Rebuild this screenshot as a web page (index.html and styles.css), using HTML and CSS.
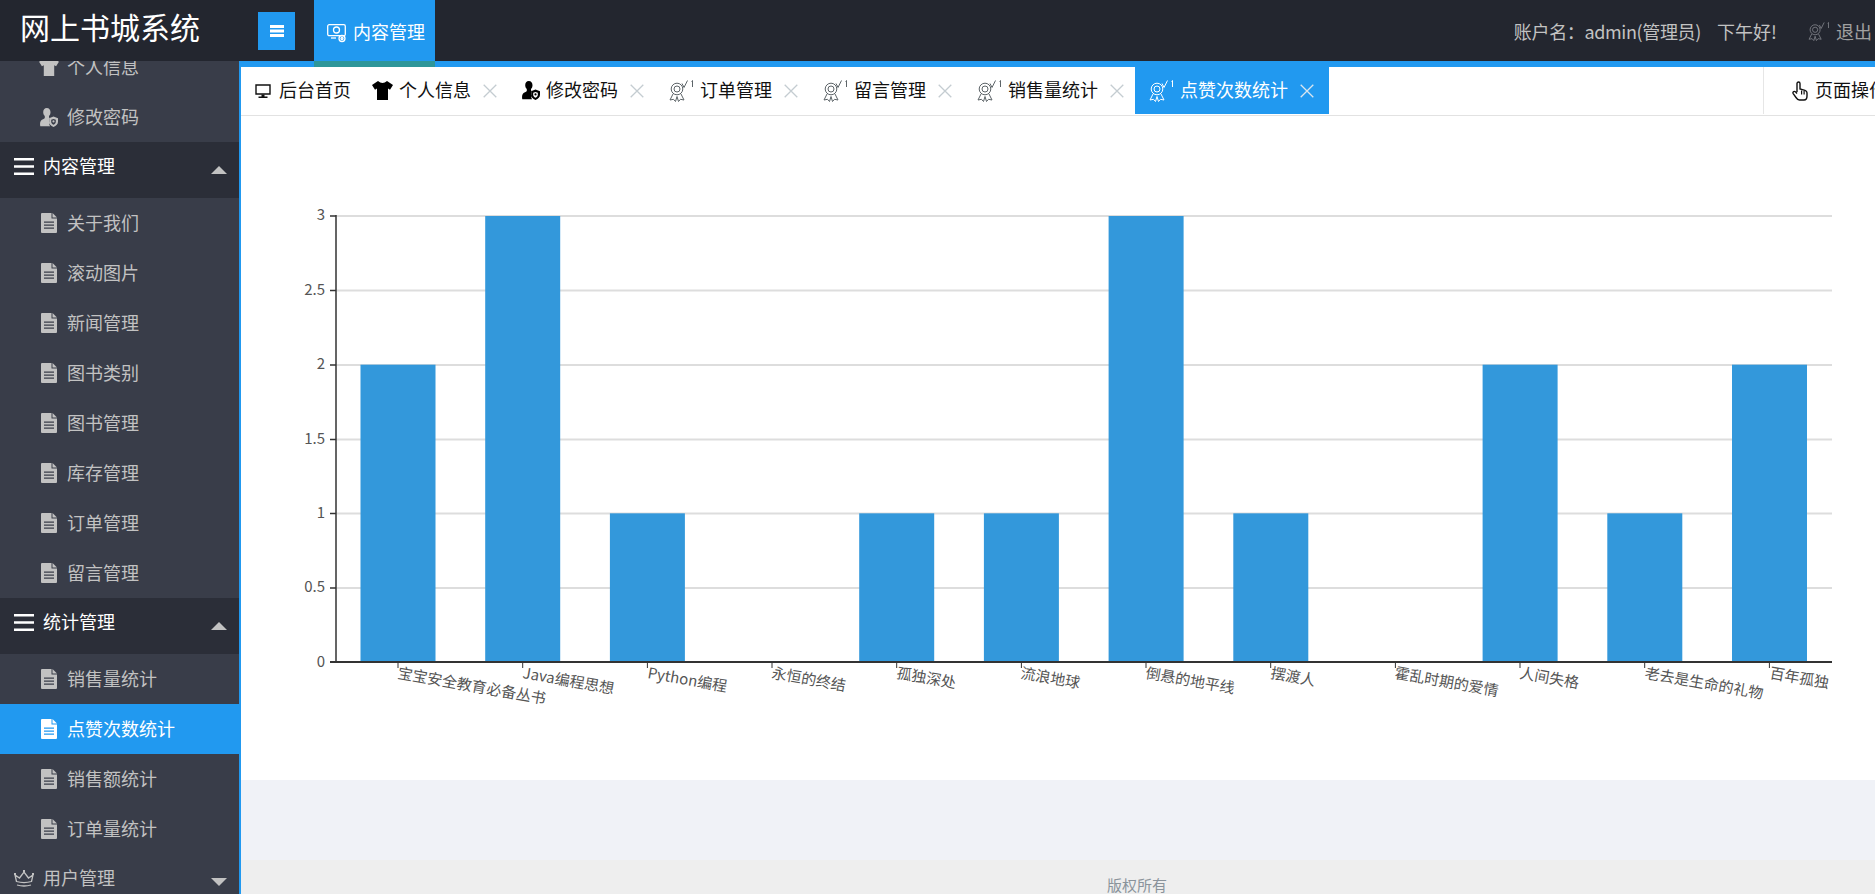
FILE: index.html
```html
<!DOCTYPE html>
<html lang="zh-CN">
<head>
<meta charset="utf-8">
<title>网上书城系统</title>
<link rel="stylesheet" href="styles.css">
</head>
<body>
<svg class="sprites" aria-hidden="true">
  <symbol id="i-monitor" viewBox="0 0 16 16">
    <path d="M1 2h14v9H1z" fill="none" stroke="currentColor" stroke-width="1.4"/>
    <path d="M6.5 11.5h3v2h-3zM3.5 13.6h9V15h-9z" fill="currentColor"/>
  </symbol>
  <symbol id="i-shirt" viewBox="0 0 21 19">
    <path fill="currentColor" d="M6 0q4.5 4 9 0l6 4-3 4.8-2-1.2V19H5V7.600L3 8.800 0 4z"/>
  </symbol>
  <symbol id="i-user" viewBox="0 0 18 19">
    <path fill="currentColor" fill-rule="evenodd" d="M6.800 0c2.300 0 3.700 1.900 3.700 4.300 0 1.500-.6 2.900-1.500 3.800v1.400l.6.300-.4.300v5.600c0 1 .3 1.800.9 2.500H.3c-.5-1.900-.2-4.600.8-5.700 1-1 2.900-1.400 3.700-2.400V8.100C3.900 7.200 3.200 5.800 3.200 4.300 3.200 1.900 4.500 0 6.800 0zM13.500 8.600l4.500 1.700v3.400c0 2.300-1.800 4.200-4.500 5.300-2.700-1.100-4.500-3-4.500-5.300v-3.400zM13.500 11l-2.300.8v2c0 1.200.9 2.300 2.300 3 1.400-.7 2.300-1.800 2.300-3v-2z"/>
    <circle cx="13.500" cy="13.400" r="1.100" fill="currentColor"/>
  </symbol>
  <symbol id="i-medal" viewBox="0 0 25 22">
    <g fill="none" stroke="currentColor" stroke-width="1">
      <circle cx="8" cy="9" r="5.800"/>
      <circle cx="8" cy="9" r="3"/>
      <path d="M4 14 1 20l3.500-.7 2 2.200L8 16.500l1.500 5 2-2.200 3.500.7L12 14"/>
      <path d="M13 3.500 15 7.500 18.500.5M22.500 1.500l1-1V7"/>
    </g>
  </symbol>
  <symbol id="i-doc" viewBox="0 0 16 20">
    <path fill="currentColor" fill-rule="evenodd" d="M1 0h9.500v5.500H16V19a1 1 0 0 1-1 1H1a1 1 0 0 1-1-1V1a1 1 0 0 1 1-1zM3 8.500v1.300h10V8.500zM3 11.500v1.300h10v-1.300zM3 14.500v1.300h10v-1.300z"/>
    <path fill="currentColor" d="M11.500 0 16 4.500h-4.500z"/>
  </symbol>
  <symbol id="i-burger" viewBox="0 0 20 17">
    <path fill="currentColor" d="M0 0h20v2.400H0zM0 7.300h20v2.400H0zM0 14.600h20V17H0z"/>
  </symbol>
  <symbol id="i-bars" viewBox="0 0 14 12">
    <path fill="currentColor" d="M0 0h14v3H0zM0 4.500h14v3H0zM0 9h14v3H0z"/>
  </symbol>
  <symbol id="i-close" viewBox="0 0 14 14">
    <path d="M.7.700l12.600 12.600M13.300.7.700 13.300" fill="none" stroke="currentColor" stroke-width="1.300"/>
  </symbol>
  <symbol id="i-hand" viewBox="0 0 16 20">
    <path fill="none" stroke="currentColor" stroke-width="1.400" d="M5 11V2.500a1.500 1.500 0 0 1 3 0V8l5 1.300c1.300.4 2 1.100 2 2.400V15c0 2-1 4-3 4H7.500C6 19 5 18 4 16.500L1.200 12.600c-.6-1-.1-2 .8-2.200.8-.2 1.500.1 3 2.100"/>
    <path fill="currentColor" d="M9 9.500h1.200v4H9zM11.500 10h1.200v3.500h-1.200z"/>
  </symbol>
  <symbol id="i-crown" viewBox="0 0 20 17">
    <g fill="none" stroke="currentColor" stroke-width="1.300">
      <path d="M2.500 11.500 1 5l4.500 3L10 2l4.500 6L19 5l-1.500 6.500c-4.500 1.300-10.500 1.300-15 0z"/>
      <path d="M3 15c4.500 1.300 9.500 1.300 14 0"/>
    </g>
    <path fill="currentColor" d="M9 0h2v2H9zM0 3h2v2H0zM18 3h2v2h-2z"/>
  </symbol>
  <symbol id="i-console" viewBox="0 0 20 19">
    <g fill="none" stroke="currentColor" stroke-width="1.300">
      <rect x=".7" y=".7" width="17.600" height="11" rx="1.500"/>
      <path d="M4 14h5"/>
      <circle cx="9.500" cy="6" r="3"/>
      <circle cx="15" cy="14.500" r="3"/>
      <circle cx="15" cy="14.500" r="1"/>
    </g>
  </symbol>
</svg>

<div class="app">
  <header class="topbar">
    <h1 class="logo">网上书城系统</h1>
    <button class="menu-btn" type="button"><svg class="i-menu"><use href="#i-bars"/></svg></button>
    <a class="nav-active"><svg class="i-console"><use href="#i-console"/></svg>内容管理</a>
    <div class="account">
      <span class="acct-name">账户名：admin(管理员)</span>
      <span class="acct-greet">下午好!</span>
      <a class="acct-exit"><svg class="i-medal"><use href="#i-medal"/></svg>退出</a>
    </div>
  </header>

  <div class="workspace">
    <aside class="sidebar">
      <ul class="menu">
        <li class="item"><span class="item-ico"><svg class="i-shirt-s"><use href="#i-shirt"/></svg></span>个人信息</li>
        <li class="item"><span class="item-ico"><svg class="i-user"><use href="#i-user"/></svg></span>修改密码</li>
        <li class="section open"><span class="sec-head"><svg class="i-burger"><use href="#i-burger"/></svg>内容管理</span><i class="arrow up"></i></li>
        <li class="item"><span class="item-ico"><svg class="i-doc"><use href="#i-doc"/></svg></span>关于我们</li>
        <li class="item"><span class="item-ico"><svg class="i-doc"><use href="#i-doc"/></svg></span>滚动图片</li>
        <li class="item"><span class="item-ico"><svg class="i-doc"><use href="#i-doc"/></svg></span>新闻管理</li>
        <li class="item"><span class="item-ico"><svg class="i-doc"><use href="#i-doc"/></svg></span>图书类别</li>
        <li class="item"><span class="item-ico"><svg class="i-doc"><use href="#i-doc"/></svg></span>图书管理</li>
        <li class="item"><span class="item-ico"><svg class="i-doc"><use href="#i-doc"/></svg></span>库存管理</li>
        <li class="item"><span class="item-ico"><svg class="i-doc"><use href="#i-doc"/></svg></span>订单管理</li>
        <li class="item"><span class="item-ico"><svg class="i-doc"><use href="#i-doc"/></svg></span>留言管理</li>
        <li class="section open"><span class="sec-head"><svg class="i-burger"><use href="#i-burger"/></svg>统计管理</span><i class="arrow up"></i></li>
        <li class="item"><span class="item-ico"><svg class="i-doc"><use href="#i-doc"/></svg></span>销售量统计</li>
        <li class="item active"><span class="item-ico"><svg class="i-doc"><use href="#i-doc"/></svg></span>点赞次数统计</li>
        <li class="item"><span class="item-ico"><svg class="i-doc"><use href="#i-doc"/></svg></span>销售额统计</li>
        <li class="item"><span class="item-ico"><svg class="i-doc"><use href="#i-doc"/></svg></span>订单量统计</li>
        <li class="section"><span class="sec-head"><svg class="i-burger"><use href="#i-crown"/></svg>用户管理</span><i class="arrow down"></i></li>
      </ul>
    </aside>

    <main class="main">
      <nav class="tabs">
        <a class="tab home"><svg class="i-monitor"><use href="#i-monitor"/></svg>后台首页</a>
        <a class="tab"><svg class="i-shirt"><use href="#i-shirt"/></svg>个人信息<svg class="i-close"><use href="#i-close"/></svg></a>
        <a class="tab"><svg class="i-user"><use href="#i-user"/></svg>修改密码<svg class="i-close"><use href="#i-close"/></svg></a>
        <a class="tab"><svg class="i-medal"><use href="#i-medal"/></svg>订单管理<svg class="i-close"><use href="#i-close"/></svg></a>
        <a class="tab"><svg class="i-medal"><use href="#i-medal"/></svg>留言管理<svg class="i-close"><use href="#i-close"/></svg></a>
        <a class="tab"><svg class="i-medal"><use href="#i-medal"/></svg>销售量统计<svg class="i-close"><use href="#i-close"/></svg></a>
        <a class="tab current"><svg class="i-medal"><use href="#i-medal"/></svg>点赞次数统计<svg class="i-close"><use href="#i-close"/></svg></a>
        <a class="page-ops"><svg class="i-hand"><use href="#i-hand"/></svg>页面操作</a>
      </nav>

      <section class="panel">
        <svg class="chart" viewBox="241 116 1634 664" width="1634" height="664">
          <g class="grid">
            <path d="M336 216H1832M336 290.500H1832M336 365H1832M336 439.500H1832M336 513.500H1832M336 588H1832"/>
          </g>
          <g class="bars">
            <rect x="360.500" y="364.670" width="75" height="297.330"/>
            <rect x="485.200" y="216" width="75" height="446"/>
            <rect x="609.900" y="513.330" width="75" height="148.670"/>
            <rect x="859.200" y="513.330" width="75" height="148.670"/>
            <rect x="983.900" y="513.330" width="75" height="148.670"/>
            <rect x="1108.600" y="216" width="75" height="446"/>
            <rect x="1233.300" y="513.330" width="75" height="148.670"/>
            <rect x="1482.600" y="364.670" width="75" height="297.330"/>
            <rect x="1607.300" y="513.330" width="75" height="148.670"/>
            <rect x="1732" y="364.670" width="75" height="297.330"/>
          </g>
          <g class="axes">
            <path d="M336 215V663M330 216H336M330 290.500H336M330 365H336M330 439.500H336M330 513.500H336M330 588H336"/>
            <path class="xaxis" d="M330 662H1832"/>
            <path class="xticks" d="M398 662V668M522.700 662V668M647.400 662V668M772 662V668M896.700 662V668M1021.400 662V668M1146 662V668M1270.700 662V668M1395.400 662V668M1520 662V668M1644.700 662V668M1769.400 662V668"/>
          </g>
          <g class="ylabels">
            <text x="325" y="220">3</text>
            <text x="325" y="295">2.5</text>
            <text x="325" y="369">2</text>
            <text x="325" y="444">1.5</text>
            <text x="325" y="518">1</text>
            <text x="325" y="592">0.5</text>
            <text x="325" y="667">0</text>
          </g>
          <g class="xlabels">
            <text transform="translate(397 678) rotate(10)">宝宝安全教育必备丛书</text>
            <text transform="translate(522 678) rotate(10)">Java编程思想</text>
            <text transform="translate(647 678) rotate(10)">Python编程</text>
            <text transform="translate(771 678) rotate(10)">永恒的终结</text>
            <text transform="translate(896 678) rotate(10)">孤独深处</text>
            <text transform="translate(1020 678) rotate(10)">流浪地球</text>
            <text transform="translate(1145 678) rotate(10)">倒悬的地平线</text>
            <text transform="translate(1270 678) rotate(10)">摆渡人</text>
            <text transform="translate(1394 678) rotate(10)">霍乱时期的爱情</text>
            <text transform="translate(1519 678) rotate(10)">人间失格</text>
            <text transform="translate(1644 678) rotate(10)">老去是生命的礼物</text>
            <text transform="translate(1769 678) rotate(10)">百年孤独</text>
          </g>
        </svg>
      </section>

      <div class="gap"></div>
      <footer class="footer">版权所有</footer>
    </main>
  </div>
</div>
</body>
</html>
```
FILE: styles.css
```css
* { box-sizing: border-box; }
html, body { margin: 0; height: 100%; overflow: hidden; }
body {
  font-family: "Noto Sans CJK SC", "Liberation Sans", sans-serif;
  font-size: 18px;
  color: #111;
  background: #f0f2f7;
}
.sprites { display: none; }
svg { display: block; flex: none; }
ul { list-style: none; margin: 0; padding: 0; }

.app { display: flex; flex-direction: column; height: 100vh; width: 100%; }

/* top bar */
.topbar {
  position: relative;
  z-index: 2;
  flex: 0 0 61px;
  height: 61px;
  display: flex;
  align-items: stretch;
  background: #23262f;
  color: #fff;
}
.logo {
  margin: 0 0 8px;
  width: 258px;
  padding-left: 20px;
  font-size: 30px;
  font-weight: 400;
  line-height: 53px;
  color: #fff;
}
.menu-btn {
  align-self: flex-start;
  margin-top: 12px;
  width: 37px;
  height: 38px;
  padding: 0;
  border: 0;
  background: #2199f0;
  color: #fff;
  display: flex;
  align-items: center;
  justify-content: center;
}
.i-menu { width: 14px; height: 12px; }
.nav-active {
  position: relative;
  margin-left: 19px;
  width: 121px;
  padding: 1px 0 0 13px;
  display: flex;
  align-items: center;
  gap: 6px;
  background: #2199f0;
  color: #fff;
}
.nav-active::after {
  content: "";
  position: absolute;
  left: 0;
  right: 0;
  top: 100%;
  height: 6px;
  background: #2e9699;
}
.i-console { width: 20px; height: 19px; margin-top: 5px; }
.account {
  margin-left: auto;
  padding: 1px 3px 0 0;
  display: flex;
  align-items: center;
  color: #c2c2c2;
}
.acct-name { letter-spacing: -0.35px; white-space: nowrap; }
.acct-greet { margin-left: 16px; width: 91px; white-space: nowrap; }
.acct-exit { display: flex; align-items: center; gap: 6px; color: #a0a0a0; }
.i-medal { width: 25px; height: 22px; }
.acct-exit .i-medal { width: 22px; height: 19px; color: #7d7f86; }

/* workspace */
.workspace { flex: 1; min-height: 0; display: flex; }

.sidebar {
  position: relative;
  flex: 0 0 241px;
  overflow: hidden;
  background: #393d49;
  border-right: 2px solid #2199f0;
  color: #c2c2c2;
}
.sidebar::after {
  content: "";
  position: absolute;
  right: -2px;
  bottom: 0;
  width: 2px;
  height: 34px;
  background: #2e9699;
}
.menu { margin-top: -19px; }
.item {
  height: 50px;
  display: flex;
  align-items: center;
  padding: 0 0 2px 40px;
}
.item-ico { width: 18px; margin: 2px 9px 0 0; display: flex; justify-content: center; }
.i-doc { width: 16px; height: 20px; }
.i-user { width: 18px; height: 19px; }
.i-shirt-s { width: 20px; height: 18px; }
.item.active { background: #2199f0; color: #fff; margin-right: -2px; }
.section {
  height: 56px;
  display: flex;
  align-items: center;
  justify-content: space-between;
  padding: 0 12px 0 14px;
}
.section.open { background: #2b2e38; color: #fff; }
.sec-head { display: flex; align-items: center; gap: 9px; margin-bottom: 10px; }
.sec-head .i-burger { margin-top: 2px; }
.i-burger { width: 20px; height: 17px; }
.arrow { width: 0; height: 0; border-left: 8px solid transparent; border-right: 8px solid transparent; }
.arrow.up { border-bottom: 8px solid #c2c2c2; }
.arrow.down { border-top: 8px solid #c2c2c2; }

/* main */
.main {
  flex: 1;
  min-width: 0;
  display: flex;
  flex-direction: column;
  border-top: 6px solid #2199f0;
  background: #f0f2f7;
}
.tabs {
  flex: 0 0 49px;
  display: flex;
  background: #fff;
  border-bottom: 1px solid #e2e2e2;
}
.tab {
  height: 47px;
  display: flex;
  align-items: center;
  gap: 6px;
  padding: 0 11px 3px 14px;
  white-space: nowrap;
  color: #111;
}
.tab svg { margin-top: 3px; }
.tab .i-medal { color: #5d6468; }
.tab .i-close { color: #c4ccd1; margin-left: 6px; }
.tab.home { gap: 8px; padding-right: 7px; }
.i-monitor { width: 16px; height: 16px; }
.i-shirt { width: 21px; height: 19px; color: #000; }
.tab .i-user { color: #000; }
.tab.current { background: #2199f0; color: #fff; padding-right: 15px; }
.tab.current .i-medal { color: #fff; }
.tab.current .i-close { color: #d9e6ef; }
.i-close { width: 14px; height: 14px; }
.page-ops {
  margin-left: auto;
  flex: 0 0 112px;
  height: 47px;
  overflow: hidden;
  display: flex;
  align-items: center;
  gap: 7px;
  padding: 0 0 3px 28px;
  border-left: 1px solid #e6e6e6;
  white-space: nowrap;
}
.i-hand { width: 16px; height: 20px; color: #111; margin-top: 3px; }

.panel { flex: 0 0 664px; background: #fff; }
.chart { width: 100%; height: 664px; }
.grid path { fill: none; stroke: #dddddd; stroke-width: 2; }
.bars rect { fill: #3398db; }
.axes path { fill: none; stroke: #333; stroke-width: 1.5; }
.axes .xaxis { stroke-width: 2; }
.axes .xticks { stroke-width: 1; }
.chart text { font-size: 15px; fill: #555; }
.ylabels text { text-anchor: end; }

.gap { flex: 1; min-height: 0; }
.footer {
  flex: 0 0 34px;
  padding: 16px 0 0 158px;
  overflow: hidden;
  text-align: center;
  font-size: 15px;
  line-height: 18px;
  color: #8a939b;
  background: #eee;
}
```
